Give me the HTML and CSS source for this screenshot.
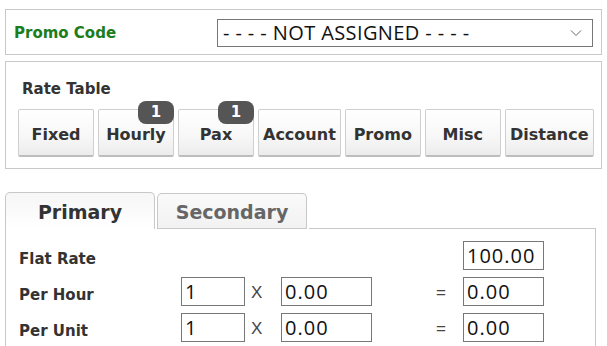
FILE: index.html
```html
<!DOCTYPE html>
<html lang="en">
<head>
    <meta charset="UTF-8">
    <title>Rates</title>
    <link rel="stylesheet" href="styles.css">
</head>
<body>

<div class="page">
    <!-- promo code picker -->
    <div class="box promo">
        <span class="promo-label">Promo Code</span>
        <div class="select">
            <span>- - - - NOT ASSIGNED - - - -</span>
            <svg width="12" height="8" viewBox="0 0 12 8"><path d="M1 1.5 L6 6.5 L11 1.5" fill="none" stroke="#666" stroke-width="1"/></svg>
        </div>
    </div>

    <!-- rate table buttons -->
    <div class="box rates">
        <div class="rates-title">Rate Table</div>
        <div class="rate-buttons">
            <button class="rate-btn">Fixed</button>
            <button class="rate-btn">Hourly<span class="badge">1</span></button>
            <button class="rate-btn">Pax<span class="badge">1</span></button>
            <button class="rate-btn">Account</button>
            <button class="rate-btn">Promo</button>
            <button class="rate-btn">Misc</button>
            <button class="rate-btn wide">Distance</button>
        </div>
    </div>

    <div class="tabs">
        <div class="tab active">Primary</div>
        <div class="tab">Secondary</div>
        <div class="tab-line"></div>
    </div>

    <div class="panel">
        <div class="row-label">Flat Rate</div>
        <div></div><div></div><div></div><div></div>
        <div class="field">100.00</div>

        <div class="row-label">Per Hour</div>
        <div class="field">1</div>
        <div class="op">X</div>
        <div class="field">0.00</div>
        <div class="op eq">=</div>
        <div class="field">0.00</div>

        <div class="row-label">Per Unit</div>
        <div class="field">1</div>
        <div class="op">X</div>
        <div class="field">0.00</div>
        <div class="op eq">=</div>
        <div class="field">0.00</div>
    </div>
</div>

</body>
</html>
```

FILE: styles.css
```css
body {
    margin: 0;
    background: #fff;
    font-family: "DejaVu Sans", Verdana, sans-serif;
    color: #333;
}

.page {
    padding: 9px 5px 0 5px;
    width: 597px;
}

.box {
    border: 1px solid #c8c8c8;
}

.promo {
    height: 44px;
    display: flex;
    align-items: center;
    padding: 0 8px;
}

.promo-label {
    width: 203px;
    color: #1c7d1c;
    font-weight: bold;
    font-size: 15px;
    padding-top: 2px;
}

.select {
    display: flex;
    align-items: center;
    justify-content: space-between;
    padding: 0 10px 0 5px;
    box-sizing: border-box;
    width: 376px;
    height: 28px;
    margin-top: 1px;
    border: 1px solid #777;
    font-family: "Open Sans", "Liberation Sans", sans-serif;
    font-size: 20px;
    letter-spacing: 0.4px;
    color: #111;
}

.rates {
    margin-top: 6px;
    height: 108px;
    padding: 0 0 0 12px;
    box-sizing: border-box;
}

.rates-title {
    font-weight: bold;
    font-size: 15px;
    margin-top: 17px;
    padding-left: 4px;
    height: 20px;
    line-height: 20px;
}

.rate-buttons {
    display: flex;
    gap: 4px;
    margin-top: 10px;
}

.rate-btn {
    position: relative;
    min-width: 76px;
    height: 48px;
    padding: 3px 4px 0 4px;
    border: 1px solid #cfcfcf;
    border-bottom: 2px solid #bdbdbd;
    border-radius: 2px;
    background: linear-gradient(#ffffff, #f7f7f7 60%, #ececec);
    font-family: "DejaVu Sans", Verdana, sans-serif;
    font-weight: bold;
    font-size: 16px;
    color: #333;
}

.rate-btn.wide {
    min-width: 89px;
}

.badge {
    position: absolute;
    top: -9px;
    right: -1px;
    width: 36px;
    height: 23px;
    line-height: 23px;
    border-radius: 8px;
    background: #555;
    color: #fff;
    font-size: 15px;
    text-align: center;
}

.tabs {
    display: flex;
    align-items: flex-end;
    margin-top: 23px;
    height: 37px;
}

.tab {
    width: 148px;
    height: 35px;
    line-height: 37px;
    border: 1px solid #c8c8c8;
    border-bottom: none;
    border-radius: 5px 5px 0 0;
    background: linear-gradient(#fafafa, #f1f1f1);
    text-align: center;
    font-weight: bold;
    font-size: 19px;
    color: #666;
    margin-right: 2px;
    box-shadow: inset 0 -1px 0 #c8c8c8;
}

.tab.active {
    height: 36px;
    line-height: 38px;
    color: #333;
    background: linear-gradient(#f6f6f6, #ffffff);
    box-shadow: none;
}

.tab-line {
    flex: 1;
    border-bottom: 1px solid #c8c8c8;
    margin-right: 6px;
}

.panel {
    width: 591px;
    height: 120px;
    box-sizing: border-box;
    border: 1px solid #c8c8c8;
    border-top: none;
    padding: 12px 0 0 13px;
    display: grid;
    grid-template-columns: 162px 64px 36px 91px 91px 81px;
    grid-auto-rows: 29px;
    row-gap: 7px;
    align-items: center;
}

.row-label {
    font-weight: bold;
    font-size: 15px;
    padding-top: 7px;
}

.field {
    height: 29px;
    box-sizing: border-box;
    border: 1px solid #777;
    padding: 0 3px;
    line-height: 27px;
    font-family: "Open Sans", "Liberation Sans", sans-serif;
    font-size: 20px;
    letter-spacing: 1px;
    color: #111;
}

.op {
    font-family: "Liberation Sans", Arial, sans-serif;
    font-size: 17px;
    color: #444;
    padding-left: 6px;
    padding-top: 3px;
}

.op.eq {
    padding-left: 64px;
}
```
